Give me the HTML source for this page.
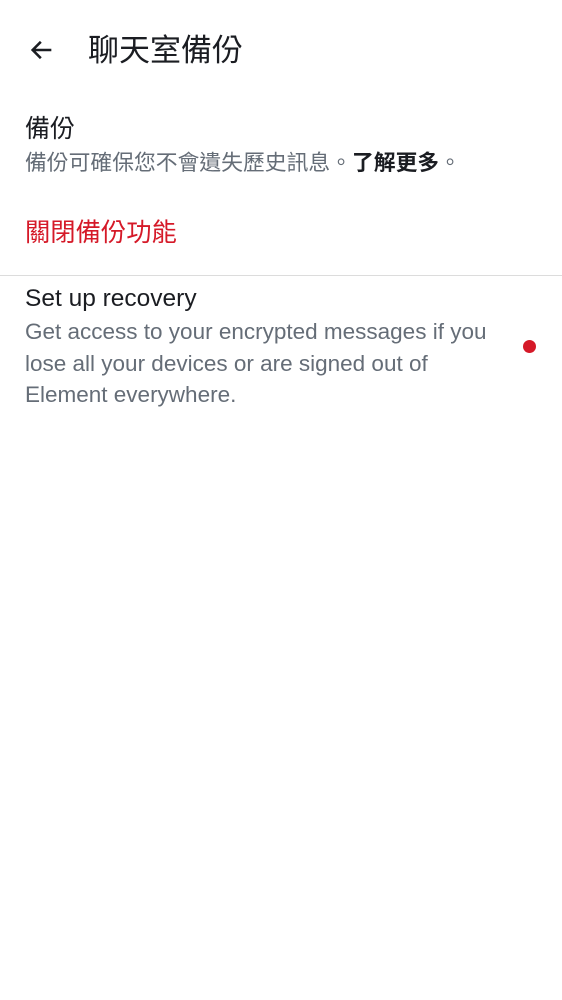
<!DOCTYPE html><html><head><meta charset="utf-8"><style>
body{margin:0;width:562px;height:1000px;background:#fff;font-family:"Liberation Sans","Noto Sans CJK TC",sans-serif;position:relative;overflow:hidden}
.a{position:absolute;white-space:nowrap}
</style></head><body>
<svg class="a" style="left:28px;top:36px" width="28" height="28" viewBox="0 0 24 24"><path d="M20 12H5M11 5l-7 7 7 7" fill="none" stroke="#1b1d22" stroke-width="2.2"/></svg>
<div class="a" style="left:88px;top:31px;font-size:31px;color:#1b1d22;line-height:40px">聊天室備份</div>
<div class="a" style="left:25px;top:113px;font-size:25px;color:#1b1d22;line-height:32px">備份</div>
<div class="a" style="left:25px;top:148px;font-size:21.8px;color:#656d77;line-height:30px">備份可確保您不會遺失歷史訊息。<b style="color:#1b1d22">了解更多</b>。</div>
<div class="a" style="left:25px;top:216px;font-size:25.3px;color:#d51928;line-height:34px">關閉備份功能</div>
<div class="a" style="left:0;top:275px;width:562px;height:1px;background:#dcdcdc"></div>
<div class="a" style="left:25px;top:284px;font-size:24.5px;color:#1b1d22;line-height:30px">Set up recovery</div>
<div class="a" style="left:25px;top:316px;font-size:22.5px;color:#656d77;line-height:31.5px">Get access to your encrypted messages if you<br>lose all your devices or are signed out of<br>Element everywhere.</div>
<div class="a" style="left:523px;top:340px;width:13px;height:13px;border-radius:50%;background:#d51928"></div>
</body></html>
